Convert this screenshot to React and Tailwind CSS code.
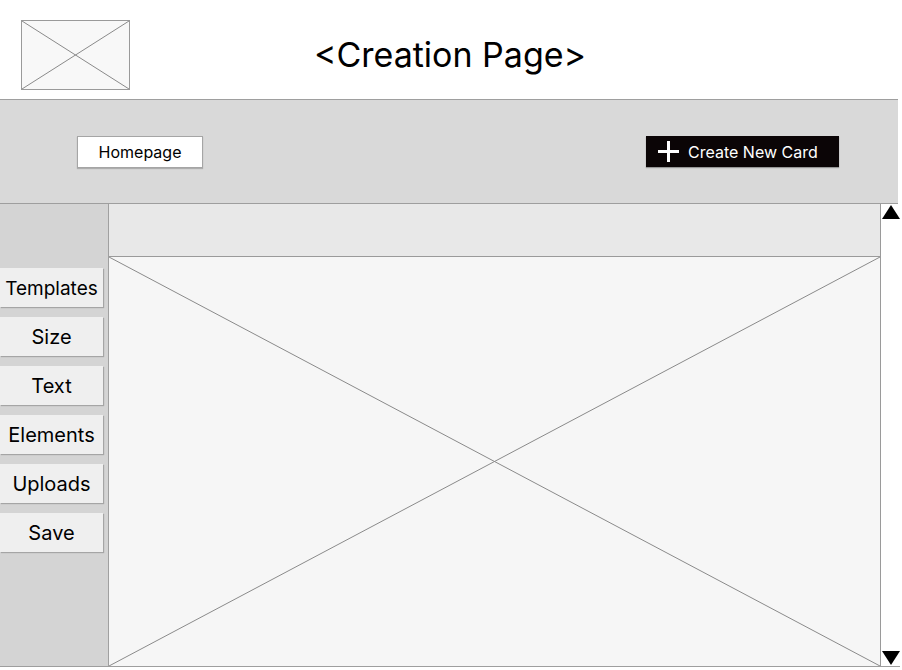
import React from 'react';

const tools = ['Templates', 'Size', 'Text', 'Elements', 'Uploads', 'Save'];

function Cross({ className }) {
  return (
    <svg className={className} viewBox="0 0 100 100" preserveAspectRatio="none">
      <line x1="0" y1="0" x2="100" y2="100" stroke="#8a8a8a" strokeWidth="1" vectorEffect="non-scaling-stroke" />
      <line x1="100" y1="0" x2="0" y2="100" stroke="#8a8a8a" strokeWidth="1" vectorEffect="non-scaling-stroke" />
    </svg>
  );
}

export default function App() {
  return (
    <div className="w-[902px] h-[670px] overflow-hidden bg-white text-black" style={{ fontFamily: 'Inter, "Liberation Sans", sans-serif' }}>
      <div className="w-[900px]">
        {/* header */}
        <header className="relative h-[100px] border-b border-[#9e9e9e] w-[898px]">
          <div className="absolute left-[21px] top-[20px] w-[109px] h-[70px] border border-[#9a9a9a] bg-[#f8f8f8]">
            <Cross className="w-full h-full block" />
          </div>
          <h1 className="pt-[33px] text-center text-[34px] leading-[44px] pl-[2px]">&lt;Creation Page&gt;</h1>
        </header>

        {/* toolbar */}
        <div className="h-[104px] w-[898px] bg-[#d9d9d9] border-b border-[#9e9e9e] flex items-center justify-between pl-[77px] pr-[59px]">
          <button className="w-[126px] h-[32px] bg-white border border-[#a5a5a5] shadow-[0_1px_1px_rgba(0,0,0,0.2)] text-[16px] leading-[28px]">
            Homepage
          </button>
          <button className="w-[193px] h-[31px] bg-[#0b0506] text-white flex items-center pl-[12px] gap-[9px] text-[16px] shadow-[0_1px_1px_rgba(0,0,0,0.3)]">
            <svg width="21" height="21" viewBox="0 0 21 21">
              <rect x="9" y="0" width="3" height="21" fill="white" />
              <rect x="0" y="9" width="21" height="3" fill="white" />
            </svg>
            Create New Card
          </button>
        </div>

        {/* body */}
        <div className="flex h-[463px] border-b border-[#9e9e9e]">
          <aside className="w-[109px] bg-[#d4d4d4] border-r border-[#a0a0a0] pt-[64px] flex flex-col gap-[10px]">
            {tools.map((t) => (
              <button
                key={t}
                className={`w-[103px] h-[39px] bg-[#efefef] shadow-[1px_1px_1px_rgba(0,0,0,0.22)] flex items-center justify-center ${t === 'Templates' ? 'text-[19px] pt-[3px]' : 'text-[20px]'}`}
              >
                {t}
              </button>
            ))}
          </aside>

          <main className="w-[771px] flex flex-col">
            <div className="h-[53px] shrink-0 bg-[#e8e8e8] border-b border-[#9a9a9a]" />
            <div className="h-[409px] shrink-0 bg-[#f6f6f6]">
              <Cross className="w-full h-full block" />
            </div>
          </main>

          <div className="w-[20px] bg-white border-l border-[#9a9a9a] flex flex-col justify-between items-center pt-[1px] pb-[1px]">
            <svg width="18" height="14" viewBox="0 0 18 14">
              <polygon points="9,0 18,14 0,14" fill="black" />
            </svg>
            <svg width="18" height="14" viewBox="0 0 18 14">
              <polygon points="0,0 18,0 9,14" fill="black" />
            </svg>
          </div>
        </div>
      </div>
    </div>
  );
}
